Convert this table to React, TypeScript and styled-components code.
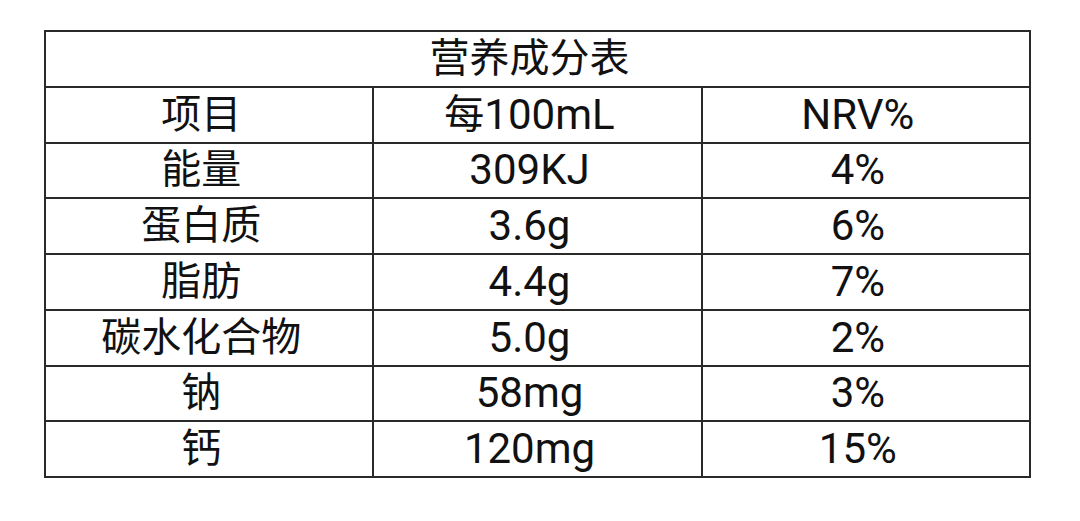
import React from 'react';
import styled, { createGlobalStyle } from 'styled-components';

const GlobalStyle = createGlobalStyle`
  html, body {
    margin: 0;
    padding: 0;
    background: #ffffff;
  }
  body {
    font-family: Roboto, "Noto Sans CJK SC", sans-serif;
    color: #111111;
  }
`;

const rows = [
  ['项目', '每100mL', 'NRV%'],
  ['能量', '309KJ', '4%'],
  ['蛋白质', '3.6g', '6%'],
  ['脂肪', '4.4g', '7%'],
  ['碳水化合物', '5.0g', '2%'],
  ['钠', '58mg', '3%'],
  ['钙', '120mg', '15%'],
];

const Page = styled.div`
  padding: 30px 0 0 44px;
`;

const Table = styled.div`
  width: 987px;
  display: grid;
  grid-template-columns: repeat(3, 1fr);
  grid-auto-rows: 55.75px;
  border-top: 2px solid #2a2a2a;
  border-left: 2px solid #2a2a2a;
  box-sizing: border-box;
`;

const Cell = styled.div<{ $span?: number }>`
  grid-column: span ${(p) => p.$span ?? 1};
  display: flex;
  align-items: center;
  justify-content: center;
  padding-right: 16px;
  border-right: 2px solid #2a2a2a;
  border-bottom: 2px solid #2a2a2a;
  font-size: 40px;
  line-height: 1;
  white-space: nowrap;
`;

const Latin = styled.span`
  font-family: Roboto, sans-serif;
  font-size: 42px;
`;

// CJK stays at 40px, digits and letters a little larger as in the print
const renderText = (text: string) =>
  text.split(/([A-Za-z0-9.%]+)/).map((part, k) =>
    /^[A-Za-z0-9.%]+$/.test(part) ? <Latin key={k}>{part}</Latin> : part
  );

export default function App() {
  return (
    <>
      <GlobalStyle />
      <Page>
        <Table>
          <Cell $span={3}>营养成分表</Cell>
          {rows.map((row, i) =>
            row.map((text, j) => <Cell key={`${i}_${j}`}>{renderText(text)}</Cell>)
          )}
        </Table>
      </Page>
    </>
  );
}
